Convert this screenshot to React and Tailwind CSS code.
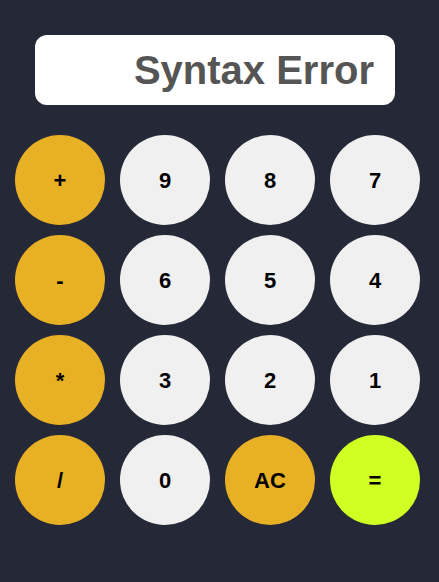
import React, { useState } from 'react';

const keys = [
  ['+', 'op'], ['9', 'num'], ['8', 'num'], ['7', 'num'],
  ['-', 'op'], ['6', 'num'], ['5', 'num'], ['4', 'num'],
  ['*', 'op'], ['3', 'num'], ['2', 'num'], ['1', 'num'],
  ['/', 'op'], ['0', 'num'], ['AC', 'op'], ['=', 'eq'],
];

const colores = {
  op: 'bg-[#e8b024]',
  num: 'bg-[#f0f0f0]',
  eq: 'bg-[#d0ff24]',
};

const App = () => {
  const [pantalla] = useState('Syntax Error');

  return (
    <div className="min-h-[582px] w-full bg-[#252836] pt-[35px] font-['Liberation_Sans',Arial,sans-serif]">
      {/* Pantalla */}
      <div className="ml-[35px] flex h-[70px] w-[360px] items-center justify-end rounded-[12px] bg-white pr-[21px]">
        <span className="text-[40px] font-bold leading-none text-[#555555]">{pantalla}</span>
      </div>

      {/* Teclado */}
      <div className="ml-[15px] mt-[30px] grid w-[405px] grid-cols-4 gap-x-[15px] gap-y-[10px]">
        {keys.map(([label, tipo]) => (
          <button
            key={label}
            className={`flex h-[90px] w-[90px] items-center justify-center rounded-full text-[22px] font-bold text-black ${colores[tipo]}`}
          >
            {label}
          </button>
        ))}
      </div>
    </div>
  );
};

export default App;
